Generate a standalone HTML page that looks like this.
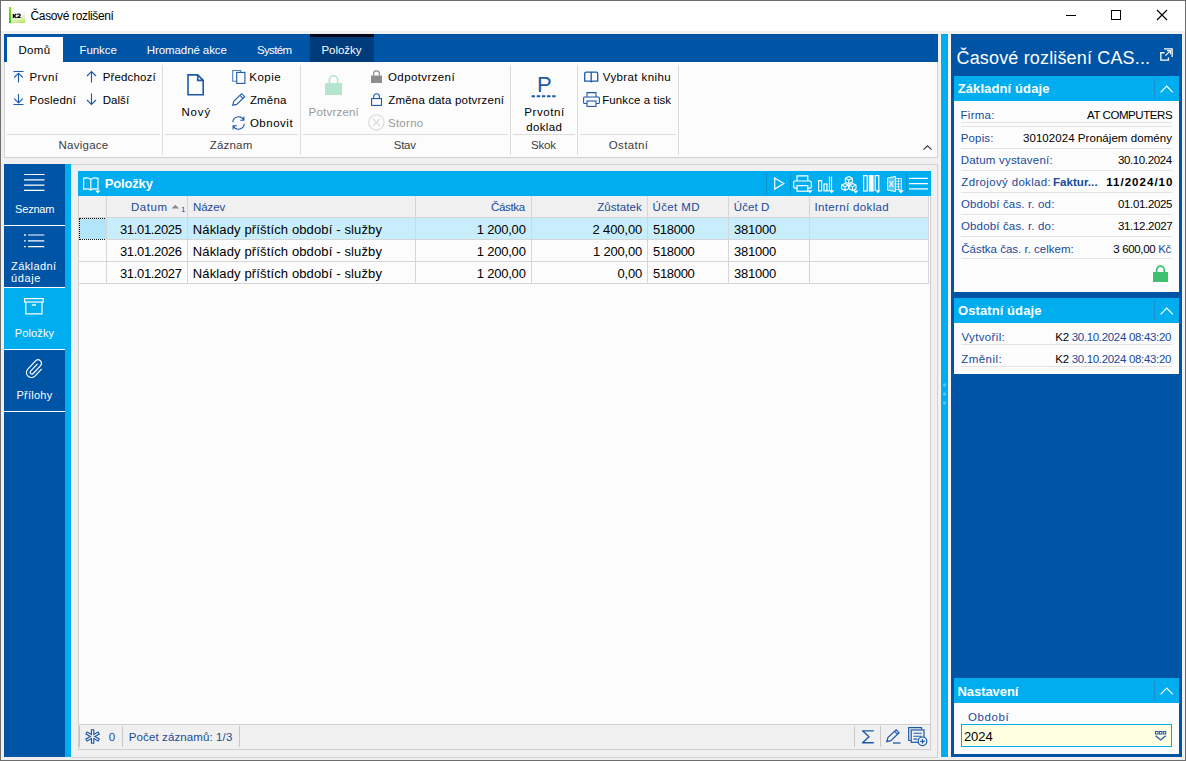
<!DOCTYPE html>
<html lang="cs">
<head>
<meta charset="utf-8">
<title>Časové rozlišení</title>
<style>
html,body{margin:0;padding:0;}
body{width:1186px;height:761px;overflow:hidden;background:#f0f0f0;font-family:"Liberation Sans",sans-serif;font-size:11.5px;color:#000;position:relative;}
.a{position:absolute;}
.t{position:absolute;white-space:nowrap;line-height:16px;height:16px;}
.c{text-align:center;}
.r{text-align:right;}
.w{color:#fff;}
.b{font-weight:bold;}
.bl{color:#1a4a98;}
.gy{color:#9a9a9a;}
.gl2{color:#3c3c3c;}
.d{font-size:13px;}
svg{position:absolute;overflow:visible;}
/* window frame */
#frame{left:0;top:0;width:1184px;height:759px;border:1px solid #6d6d6d;}
#titlebar{left:1px;top:1px;width:1184px;height:30px;background:#fff;}
/* ribbon */
#tabbar{left:4px;top:34px;width:934px;height:28px;background:#0054a6;}
#tabhome{left:7px;top:37px;width:56px;height:25px;background:#fcfcfc;}
#tabpol{left:310px;top:34px;width:64px;height:28px;background:#003b7c;border-top:3px solid #00091c;box-sizing:border-box;}
#ribbon{left:4px;top:62px;width:932px;height:95px;background:#fcfcfc;border:1px solid #d2d2d2;border-top:none;box-sizing:content-box;}
.vs{position:absolute;width:1px;background:#dcdcdc;top:65px;height:90px;}
.hs{position:absolute;height:1px;background:#dcdcdc;top:134px;}
/* sidebar */
#side{left:4px;top:164px;width:61px;height:593px;background:#0054a6;}
#sidec{left:65px;top:164px;width:6px;height:593px;background:#00adef;}
.sl{position:absolute;left:4px;width:61px;height:1px;background:#fff;}
/* splitter + right panel */
#spl{left:941px;top:34px;width:7px;height:723px;background:#00adef;}
#rp{left:951px;top:34px;width:231px;height:723px;background:#0054a6;}
.sh{position:absolute;left:954px;width:225px;height:24px;background:#00adef;}
.sb{position:absolute;left:954px;width:225px;background:#fcfcfc;}
.shs{position:absolute;left:1154px;width:1px;background:#1c8fd0;}
.rl{position:absolute;left:961px;width:211px;height:1px;background:#e3e3e3;}
/* grid */
#ghead{left:78px;top:171px;width:853px;height:25px;background:#00adef;}
#gbody{left:78px;top:196px;width:853px;height:528px;background:#fcfcfc;border-left:1px solid #d0d0d0;border-right:1px solid #d0d0d0;box-sizing:border-box;}
#gcol{left:79px;top:196px;width:849px;height:22px;background:#f0f0f0;}
#gfoot{left:78px;top:724px;width:853px;height:26px;background:#f0f0f0;border:1px solid #cfcfcf;box-sizing:border-box;}
.gl{position:absolute;background:#d6d6d6;}
</style>
</head>
<body>
<div class="a" id="titlebar"></div>
<div class="a" id="tabbar"></div>
<div class="a" id="tabhome"></div>
<div class="a" id="tabpol"></div>
<div class="a" id="ribbon"></div>
<div class="a" id="side"></div>
<div class="a" id="sidec"></div>
<div class="a" style="left:940px;top:34px;width:11px;height:723px;background:#faf5f2;"></div>
<div class="a" id="spl"></div>
<div class="a" id="rp"></div>
<div class="a" id="ghead"></div>
<div class="a" id="gbody"></div>
<div class="a" id="gcol"></div>
<div class="a" id="gfoot"></div>
<!--TITLE-->
<div class="a" style="left:11px;top:11px;width:14px;height:12px;background:linear-gradient(165deg,#ffffff 0%,#f3f3f3 40%,#e6f3cc 62%,#c3e97c 85%,#aee050 100%);"></div>
<div class="a" style="left:9px;top:7px;width:2px;height:16px;background:linear-gradient(180deg,#8ddc18,#3cc010);"></div>
<svg style="left:12.300px;top:12.700px;" width="10" height="6" viewBox="0 0 10 6"><g fill="none" stroke="#000" stroke-width="1.300"><path d="M1.400 0.900V5M4.300 0.900L2 3L4.400 5"/><path d="M5.300 1.700C6 0.700 8.300 0.800 8.200 2.100C8.100 3 6.300 3.500 5.500 4.500H8.700" stroke-width="1.150"/></g></svg>
<div class="t" id="wtitle" style="left:30.5px;top:8px;font-size:12px;letter-spacing:-0.35px;">Časové rozlišení</div>
<svg style="left:1064px;top:9px;" width="110" height="14" viewBox="0 0 110 14"><g fill="none" stroke="#000" stroke-width="1"><path d="M2 6.500H12"/><rect x="47.500" y="1.500" width="9" height="9"/><path d="M93 1L103 11M103 1L93 11" stroke-width="1.150"/></g></svg>
<!--TABS-->
<div class="t" id="tb1" style="left:18.5px;top:42px;letter-spacing:0.317px;">Domů</div>
<div class="t w" id="tb2" style="left:79.59px;top:42px;letter-spacing:-0.09px;">Funkce</div>
<div class="t w" id="tb3" style="left:146.78px;top:42px;letter-spacing:-0.087px;">Hromadné akce</div>
<div class="t w" id="tb4" style="left:257px;top:42px;letter-spacing:-0.65px;">Systém</div>
<div class="t w" id="tb5" style="left:321.41px;top:42px;letter-spacing:-0.025px;">Položky</div>
<!--RIBBON-->
<div class="vs" style="left:162px;"></div><div class="vs" style="left:300px;"></div><div class="vs" style="left:510px;"></div><div class="vs" style="left:577px;"></div><div class="vs" style="left:678px;"></div>
<div class="hs" style="left:7px;width:153px;"></div><div class="hs" style="left:165px;width:133px;"></div><div class="hs" style="left:303px;width:205px;"></div><div class="hs" style="left:513px;width:62px;"></div><div class="hs" style="left:580px;width:96px;"></div>
<!-- nav icons -->
<svg style="left:13px;top:70px;" width="11" height="13" viewBox="0 0 11 13"><g fill="none" stroke="#1c5aa8" stroke-width="1.1"><path d="M0.500 1.500H10.500M5.500 3.200V12.500M1.200 7.500L5.500 3.200L9.800 7.500"/></g></svg>
<svg style="left:13px;top:93px;" width="11" height="13" viewBox="0 0 11 13"><g fill="none" stroke="#1c5aa8" stroke-width="1.1"><path d="M0.500 11.500H10.500M5.500 1V10M1.200 5.700L5.500 10L9.800 5.700"/></g></svg>
<svg style="left:86px;top:70px;" width="11" height="13" viewBox="0 0 11 13"><g fill="none" stroke="#1c5aa8" stroke-width="1.1"><path d="M5.5 1.5V12.5M1 6L5.5 1.5L10 6"/></g></svg>
<svg style="left:86px;top:93px;" width="11" height="13" viewBox="0 0 11 13"><g fill="none" stroke="#1c5aa8" stroke-width="1.1"><path d="M5.5 0.5V11.5M1 7L5.5 11.5L10 7"/></g></svg>
<div class="t" id="r1" style="left:29.52px;top:69px;letter-spacing:0.376px;">První</div>
<div class="t" id="r2" style="left:29.59px;top:92px;letter-spacing:0.214px;">Poslední</div>
<div class="t" id="r3" style="left:102.66px;top:69px;letter-spacing:0.162px;">Předchozí</div>
<div class="t" id="r4" style="left:102.68px;top:92px;letter-spacing:0.051px;">Další</div>
<!-- Novy -->
<svg style="left:187px;top:74px;" width="18" height="22" viewBox="0 0 18 22"><path d="M1 0.900H10.700L16.200 6.400V20.700H1Z M10.700 0.900V6.400H16.200" fill="none" stroke="#1c5aa8" stroke-width="1.600"/></svg>
<div class="t c" id="r5" style="left:166.25px;width:60px;top:104px;letter-spacing:0.867px;">Nový</div>
<svg style="left:232px;top:70px;" width="14" height="14" viewBox="0 0 14 14"><g fill="none" stroke="#1c5aa8" stroke-width="1.1"><path d="M4.600 11.200H0.700V0.500H8.700V2.400" stroke="#4a7fc0"/><rect x="4.700" y="2.400" width="8.200" height="11"/></g></svg>
<svg style="left:232px;top:93px;" width="14" height="13" viewBox="0 0 14 13"><g fill="none" stroke="#1c5aa8" stroke-width="1.1"><path d="M0.7 12.3L1.7 8.4L9.6 0.7L12.7 3.7L4.7 11.4Z M8 2.3L11 5.3"/></g></svg>
<svg style="left:232px;top:116px;" width="13" height="14" viewBox="0 0 13 14"><g fill="none" stroke="#1c5aa8" stroke-width="1.1"><path d="M0.8 6.2A5.7 5.7 0 0 1 11.5 3.8M11.9 0.5V4.2H8.2"/><path d="M12.2 7.8A5.7 5.7 0 0 1 1.5 10.2M1.1 13.5V9.8H4.8"/></g></svg>
<div class="t" id="r6" style="left:249.31px;top:69px;letter-spacing:0.462px;">Kopie</div>
<div class="t" id="r7" style="left:249.94px;top:92px;letter-spacing:0.149px;">Změna</div>
<div class="t" id="r8" style="left:249.92px;top:115px;letter-spacing:0.517px;">Obnovit</div>
<!-- Stav -->
<svg style="left:325px;top:74px;" width="18" height="21" viewBox="0 0 18 21"><path d="M4.300 9V6A4.200 4.200 0 0 1 12.700 6V9" fill="none" stroke="#b4e6cf" stroke-width="1.600"/><rect x="0" y="9" width="17" height="12" fill="#b4e6cf"/></svg>
<div class="t c gy" id="r9" style="left:303.3px;width:61px;top:104px;letter-spacing:0.211px;">Potvrzení</div>
<svg style="left:371px;top:70px;" width="12" height="13" viewBox="0 0 12 13"><path d="M2.600 5.500V3.800A2.900 2.900 0 0 1 8.400 3.800V5.500" fill="none" stroke="#8c8c8c" stroke-width="1.200"/><rect x="0" y="5.500" width="11" height="7.500" fill="#8c8c8c"/></svg>
<svg style="left:371px;top:93px;" width="12" height="13" viewBox="0 0 12 13"><g fill="none" stroke="#1c5aa8" stroke-width="1.1"><path d="M2.700 5.500V3.600A2.850 2.850 0 0 1 8.400 3.600V5.500"/><rect x="0.600" y="5.600" width="9.900" height="6.800"/></g></svg>
<svg style="left:368px;top:114px;" width="17" height="17" viewBox="0 0 17 17"><g fill="none" stroke="#d9d9d9" stroke-width="1.100"><circle cx="8.400" cy="8.400" r="7.700"/><path d="M5 5L11.800 11.800M11.800 5L5 11.800"/></g></svg>
<div class="t" id="r10" style="left:388.02px;top:69px;letter-spacing:0.395px;">Odpotvrzení</div>
<div class="t" id="r11" style="left:388.2px;top:92px;letter-spacing:0.205px;">Změna data potvrzení</div>
<div class="t gy" id="r12" style="left:387.98px;top:115px;letter-spacing:0.27px;">Storno</div>
<!-- Skok -->
<div class="t" id="r13i" style="left:537px;top:71.700px;font-size:22px;line-height:26px;height:26px;color:#1c5aa8;">P</div>
<svg style="left:531px;top:94px;" width="26" height="5" viewBox="0 0 26 5"><path d="M0.600 2.300H25" stroke="#1c5aa8" stroke-width="2" stroke-dasharray="3.400 1.750" fill="none"/></svg>
<div class="t c" id="r13" style="left:513.6px;width:62px;top:104px;letter-spacing:0.583px;">Prvotní</div>
<div class="t c" id="r14" style="left:513.27px;width:62px;top:119px;letter-spacing:0.37px;">doklad</div>
<!-- Ostatni -->
<svg style="left:584.300px;top:71px;" width="15" height="12" viewBox="0 0 15 12"><path d="M7.200 1.200H2.100Q0.700 1.200 0.700 2.600V10.200H5.900Q7.200 10.200 7.200 11.300Q7.200 10.200 8.500 10.200H13.700V2.600Q13.700 1.200 12.300 1.200H7.200V11" fill="none" stroke="#1c5aa8" stroke-width="1.300"/></svg>
<svg style="left:583px;top:92px;" width="17" height="15" viewBox="0 0 17 15"><g fill="none" stroke="#1c5aa8" stroke-width="1.1"><path d="M4 5V0.600H13V5"/><rect x="0.600" y="5" width="15.800" height="6.500" rx="1"/><rect x="4" y="9" width="9" height="5.400" fill="#fcfcfc"/></g></svg>
<div class="t" id="r15" style="left:602.78px;top:69px;letter-spacing:0.391px;">Vybrat knihu</div>
<div class="t" id="r16" style="left:602.24px;top:92px;letter-spacing:0.095px;">Funkce a tisk</div>
<!-- group labels -->
<div class="t c gl2" id="g1" style="left:33.53px;width:100px;top:137px;letter-spacing:0.242px;">Navigace</div>
<div class="t c gl2" id="g2" style="left:181.08px;width:100px;top:137px;letter-spacing:0.19px;">Záznam</div>
<div class="t c gl2" id="g3" style="left:354.75px;width:100px;top:137px;letter-spacing:-0.217px;">Stav</div>
<div class="t c gl2" id="g4" style="left:493.33px;width:100px;top:137px;letter-spacing:-0.167px;">Skok</div>
<div class="t c gl2" id="g5" style="left:578.55px;width:100px;top:137px;letter-spacing:0.334px;">Ostatní</div>
<svg style="left:923.200px;top:145.300px;" width="10" height="6" viewBox="0 0 10 6"><path d="M0.500 4.700L4.550 0.900L8.600 4.700" fill="none" stroke="#3a3a3a" stroke-width="1.150"/></svg>
<!--SIDE-->
<div class="a" style="left:4px;top:288px;width:67px;height:61px;background:#00adef;"></div>
<div class="sl" style="top:225px;"></div><div class="sl" style="top:287px;"></div><div class="sl" style="top:349px;"></div><div class="sl" style="top:411px;"></div>
<svg style="left:24px;top:173px;" width="21" height="18" viewBox="0 0 21 18"><path d="M0 1.500H20.500M0 6.800H20.500M0 12.100H20.500M0 17.300H20.500" stroke="#fff" stroke-width="1.200" fill="none"/></svg>
<svg style="left:24px;top:234px;" width="21" height="14" viewBox="0 0 21 14"><path d="M4 1H20.300M4 6.800H20.300M4 12.600H20.300" stroke="#fff" stroke-width="1.200" fill="none"/><path d="M0 1H1.800M0 6.800H1.800M0 12.600H1.800" stroke="#fff" stroke-width="1.300" fill="none"/></svg>
<svg style="left:24px;top:298px;" width="20" height="17" viewBox="0 0 20 17"><g fill="none" stroke="#fff" stroke-width="1.200"><rect x="0.600" y="0.600" width="18.600" height="3.400"/><path d="M1.800 4V15.800H18V4"/><path d="M7.800 7H12" stroke-width="1.400"/></g></svg>
<svg style="left:25px;top:358px;" width="18" height="20" viewBox="0 0 18 20"><path d="M12.200 6.200L5.600 13.200A1.700 1.700 0 0 0 8.200 15.500L15.800 7.400A3.500 3.500 0 0 0 10.800 2.600L2.600 11.300A5 5 0 0 0 9.900 18.100L16.300 11.300" fill="none" stroke="#fff" stroke-width="1.200" stroke-linecap="round"/></svg>
<div class="t w" id="s1" style="left:15.08px;top:201px;font-size:11px;letter-spacing:-0.2px;">Seznam</div>
<div class="t w" id="s2" style="left:11.03px;top:257.500px;font-size:11px;letter-spacing:0.407px;">Základní</div>
<div class="t w" id="s3" style="left:11.08px;top:269.700px;font-size:11px;letter-spacing:0.601px;">údaje</div>
<div class="t w" id="s4" style="left:14.68px;top:325px;font-size:11px;letter-spacing:0.15px;">Položky</div>
<div class="t w" id="s5" style="left:16.52px;top:387px;font-size:11px;letter-spacing:0.241px;">Přílohy</div>
<!--GRID-->
<div class="a" style="left:71px;top:164px;width:866px;height:592px;border:1px solid #d2d2d2;border-left:none;box-sizing:content-box;"></div>
<!-- selected row -->
<div class="a" style="left:79px;top:218px;width:849px;height:21px;background:#c9eefb;"></div>
<div class="a" style="left:79px;top:218px;width:27px;height:21px;background:#b3e5fa;"></div>
<div class="a" style="left:79px;top:218px;width:28px;height:22px;border:1px dotted #111;box-sizing:border-box;"></div>
<!-- h lines -->
<div class="gl" style="left:79px;top:217px;width:850px;height:1px;"></div><div class="gl" style="left:106px;top:239px;width:823px;height:1px;"></div><div class="gl" style="left:79px;top:261px;width:850px;height:1px;"></div><div class="gl" style="left:79px;top:283px;width:850px;height:1px;"></div>
<!-- v lines -->
<div class="gl" style="left:106px;top:196px;width:1px;height:88px;"></div><div class="gl" style="left:187px;top:196px;width:1px;height:88px;"></div><div class="gl" style="left:415px;top:196px;width:1px;height:88px;"></div><div class="gl" style="left:531px;top:196px;width:1px;height:88px;"></div><div class="gl" style="left:647px;top:196px;width:1px;height:88px;"></div><div class="gl" style="left:728px;top:196px;width:1px;height:88px;"></div><div class="gl" style="left:809px;top:196px;width:1px;height:88px;"></div><div class="gl" style="left:928px;top:196px;width:1px;height:88px;"></div>
<!-- header title -->
<svg style="left:83px;top:177px;" width="17" height="16" viewBox="0 0 17 16"><g fill="none" stroke="#fff" stroke-width="1.200"><path d="M7.800 2.500C6.300 1 3 0.800 0.600 1.300V12.200C3 11.700 6.300 11.900 7.800 13C9.300 11.900 12.600 11.700 15 12.200V1.300C12.600 0.800 9.300 1 7.800 2.500ZM7.800 2.500V13"/></g><path d="M12.200 13.500H17.400L14.800 16.500Z" fill="#fff"/></svg>
<div class="t w b" id="gt" style="left:104.69px;top:176px;font-size:13px;letter-spacing:-0.158px;">Položky</div>
<!-- toolbar -->
<div class="a" style="left:766px;top:173px;width:1px;height:21px;background:#0b93d2;"></div><div class="a" style="left:790px;top:173px;width:1px;height:21px;background:#0b93d2;"></div><div class="a" style="left:906px;top:173px;width:1px;height:21px;background:#0b93d2;"></div>
<svg style="left:774px;top:177px;" width="11" height="13" viewBox="0 0 11 13"><path d="M0.700 0.900L9.800 6.500L0.700 12.100Z" fill="none" stroke="#fff" stroke-width="1.200" stroke-linejoin="miter"/></svg>
<svg style="left:793px;top:175px;" width="20" height="19" viewBox="0 0 20 19"><g fill="none" stroke="#fff" stroke-width="1.200"><path d="M4 6V0.800H14.800V6"/><rect x="0.700" y="6" width="17.600" height="7.200" rx="1.200"/><rect x="4" y="10.600" width="10.800" height="5.600" fill="#00adef"/></g><path d="M14.300 15.300H19.700L17 18.300Z" fill="#fff"/></svg>
<svg style="left:818px;top:176px;" width="18" height="18" viewBox="0 0 18 18"><g fill="none" stroke="#fff" stroke-width="1.200"><rect x="0.600" y="4.600" width="3" height="10.300"/><rect x="6" y="8" width="3" height="6.900"/><path d="M13.500 0.600V14.500"/><path d="M11.400 0.600V14.900H9.200" stroke-width="1"/></g><path d="M10.800 14.300H16.200L13.500 17.400Z" fill="#fff"/></svg>
<svg style="left:841px;top:176px;" width="18" height="18" viewBox="0 0 18 18"><g fill="none" stroke="#fff" stroke-width="1.100" stroke-linejoin="round"><path d="M7.800 0.600L11.300 2.300V6L7.800 7.700L4.300 6V2.300ZM4.300 2.300L7.800 4L11.300 2.300M7.800 4V7.700"/><path d="M4 7.400L7.500 9.100V12.800L4 14.500L0.600 12.800V9.100ZM0.600 9.100L4 10.800L7.500 9.100M4 10.800V14.500"/><path d="M11.500 7.400L15 9.100V12.800L11.500 14.500L8.100 12.800V9.100ZM8.100 9.100L11.500 10.800L15 9.100M11.500 10.800V14.500"/></g><path d="M12 14.400H17.400L14.700 17.400Z" fill="#fff"/></svg>
<svg style="left:863px;top:175px;" width="18" height="19" viewBox="0 0 18 19"><g fill="none" stroke="#fff" stroke-width="1.200"><rect x="0.600" y="0.700" width="3.600" height="15.300"/><rect x="6.400" y="0.700" width="3.600" height="15.300" fill="#fff"/><path d="M12.200 16V0.700H15.800V15"/></g><path d="M12.200 15.200H17.600L14.900 18.300Z" fill="#fff"/></svg>
<svg style="left:887px;top:176px;" width="18" height="18" viewBox="0 0 18 18"><path d="M0.500 2L8.500 0.500V15.500L0.500 14Z" fill="#fff" fill-opacity="0.350" stroke="#fff" stroke-width="1"/><path d="M2.600 5L6.400 11M6.400 5L2.600 11" stroke="#fff" stroke-width="1.100" fill="none"/><path d="M8.500 2.500H14.500V13.500H8.500M8.500 5.200H14.500M8.500 8H14.500M8.500 10.800H14.500M11.500 2.500V13.500" fill="none" stroke="#fff" stroke-width="0.900" stroke-opacity="0.850"/><path d="M11.200 14.300H16.800L14 17.400Z" fill="#fff"/></svg>
<svg style="left:909px;top:177px;" width="19" height="13" viewBox="0 0 19 13"><path d="M0 1.400H19M0 6.600H19M0 11.900H19" stroke="#fff" stroke-width="1.400" fill="none"/></svg>
<!-- column headers -->
<div class="t bl" id="h1" style="left:130.9px;top:199px;letter-spacing:0.586px;">Datum</div>
<svg style="left:171px;top:204px;" width="9" height="5" viewBox="0 0 9 5"><path d="M0.500 4.600L4.300 0.800L8.100 4.600Z" fill="#8a8a8a"/></svg>
<div class="t bl" id="h1n" style="left:181px;top:205px;font-size:8px;line-height:10px;height:10px;">1</div>
<div class="t bl" id="h2" style="left:192.99px;top:199px;letter-spacing:-0.1px;">Název</div>
<div class="t bl" id="h3" style="left:490.98px;top:199px;letter-spacing:-0.33px;">Částka</div>
<div class="t bl" id="h4" style="left:597.13px;top:199px;letter-spacing:0.064px;">Zůstatek</div>
<div class="t bl" id="h5" style="left:652.55px;top:199px;letter-spacing:0.375px;">Účet MD</div>
<div class="t bl" id="h6" style="left:733.8px;top:199px;letter-spacing:0.07px;">Účet D</div>
<div class="t bl" id="h7" style="left:814.48px;top:199px;letter-spacing:0.35px;">Interní doklad</div>
<!-- rows -->
<div class="t d" id="a1" style="left:119.95px;top:222px;letter-spacing:-0.338px;">31.01.2025</div><div class="t d" id="a2" style="left:192.76px;top:222px;letter-spacing:0.136px;">Náklady příštích období - služby</div><div class="t d" id="a3" style="left:476.73px;top:222px;letter-spacing:-0.208px;">1 200,00</div><div class="t d" id="a4" style="left:592.54px;top:222px;letter-spacing:-0.128px;">2 400,00</div><div class="t d" id="a5" style="left:652.95px;top:222px;letter-spacing:-0.31px;">518000</div><div class="t d" id="a6" style="left:734.09px;top:222px;letter-spacing:-0.23px;">381000</div>
<div class="t d" id="b1" style="left:119.95px;top:244px;letter-spacing:-0.338px;">31.01.2026</div><div class="t d" id="b2" style="left:192.76px;top:244px;letter-spacing:0.136px;">Náklady příštích období - služby</div><div class="t d" id="b3" style="left:476.73px;top:244px;letter-spacing:-0.208px;">1 200,00</div><div class="t d" id="b4" style="left:593.04px;top:244px;letter-spacing:-0.199px;">1 200,00</div><div class="t d" id="b5" style="left:653px;top:244px;letter-spacing:-0.31px;">518000</div><div class="t d" id="b6" style="left:734.09px;top:244px;letter-spacing:-0.23px;">381000</div>
<div class="t d" id="c1" style="left:119.95px;top:266px;letter-spacing:-0.339px;">31.01.2027</div><div class="t d" id="c2" style="left:192.76px;top:266px;letter-spacing:0.136px;">Náklady příštích období - služby</div><div class="t d" id="c3" style="left:476.73px;top:266px;letter-spacing:-0.208px;">1 200,00</div><div class="t d" id="c4" style="left:617.54px;top:266px;letter-spacing:-0.216px;">0,00</div><div class="t d" id="c5" style="left:653px;top:266px;letter-spacing:-0.31px;">518000</div><div class="t d" id="c6" style="left:734.09px;top:266px;letter-spacing:-0.23px;">381000</div>
<!-- footer -->
<div class="a" style="left:79px;top:726px;width:1px;height:21px;background:#c4c4c4;"></div><div class="a" style="left:122px;top:726px;width:1px;height:21px;background:#c8c8c8;"></div><div class="a" style="left:239px;top:726px;width:1px;height:21px;background:#c8c8c8;"></div><div class="a" style="left:854px;top:726px;width:1px;height:21px;background:#c8c8c8;"></div><div class="a" style="left:880px;top:726px;width:1px;height:21px;background:#c8c8c8;"></div>
<svg style="left:85px;top:729px;" width="16" height="16" viewBox="0 0 16 16"><g fill="none" stroke="#1c5aa8" stroke-width="3.500" stroke-linecap="butt"><path d="M7.600 0.200V14.800M1 3.700L14.200 11.300M14.200 3.700L1 11.300"/></g><g fill="none" stroke="#f0f0f0" stroke-width="1.200" stroke-linecap="butt"><path d="M7.600 1.300V13.700M2 4.300L13.200 10.700M13.200 4.300L2 10.700"/></g></svg>
<div class="t bl" id="f1" style="left:108.67px;top:729.300px;letter-spacing:1.2px;">0</div>
<div class="t bl" id="f2" style="left:128.73px;top:729.300px;letter-spacing:0.115px;">Počet záznamů: 1/3</div>
<svg style="left:861px;top:729px;" width="14" height="16" viewBox="0 0 14 16"><path d="M12.300 1.850H1.500L8 7.750L1.500 13.700H12.300" fill="none" stroke="#1c5aa8" stroke-width="1.400" stroke-linecap="round" stroke-linejoin="round"/></svg>
<svg style="left:886px;top:729px;" width="15" height="15" viewBox="0 0 15 15"><g fill="none" stroke="#1c5aa8" stroke-width="1.200"><path d="M0.800 12.600L1.900 8.600L10.100 0.800L13.100 3.700L4.900 11.600Z M8.500 2.400L11.500 5.300"/><path d="M7 14H14.500" stroke-width="1.300"/></g></svg>
<svg style="left:908px;top:727px;" width="20" height="20" viewBox="0 0 20 20"><g fill="none" stroke="#1c5aa8" stroke-width="1.200"><path d="M2.800 13.500H0.700V0.700H13.500V2.500"/><rect x="3.200" y="3" width="12.800" height="12.300" fill="#f0f0f0"/><path d="M5.500 6.300H13.800M5.500 9.200H13.800M5.500 12.100H9.500" stroke-width="1.100"/><circle cx="14.500" cy="14.300" r="4.300" fill="#f0f0f0"/><path d="M12.200 14.300H16.800M14.500 12V16.600"/></g></svg>
<!--RIGHT-->
<div class="t w" id="pt" style="left:956.55px;top:45.800px;font-size:18px;line-height:24px;height:24px;letter-spacing:0.157px;">Časové rozlišení CAS...</div>
<svg style="left:1160px;top:47px;" width="14" height="15" viewBox="0 0 14 15"><g fill="none" stroke="#fff" stroke-width="1.300"><path d="M4.600 5.750H0.850V13.150H8.450V10.600"/><path d="M4 1.850H12.150V10"/><path d="M5.400 8.700L10.300 3.800M6.900 3.700H10.500V7.300" stroke-width="1.200"/></g></svg>
<div class="sh" style="top:76px;height:25px;"></div><div class="sb" style="top:101px;height:191px;"></div><div class="shs" style="top:78px;height:21px;"></div>
<div class="t w b" id="sh1" style="left:957.64px;top:80.800px;font-size:13px;letter-spacing:0.119px;">Základní údaje</div>
<svg style="left:1160px;top:85px;" width="14" height="8" viewBox="0 0 14 8"><path d="M0.600 7.400L6.700 1.200L12.800 7.400" fill="none" stroke="#fff" stroke-width="1.200"/></svg>
<div class="rl" style="top:122px;"></div><div class="rl" style="top:126px;"></div><div class="rl" style="top:148px;"></div><div class="rl" style="top:170px;"></div><div class="rl" style="top:192px;"></div><div class="rl" style="top:214px;"></div><div class="rl" style="top:236px;"></div><div class="rl" style="top:258px;"></div>
<div class="t bl" id="p1" style="left:960.62px;top:107.2px;letter-spacing:0.24px;">Firma:</div><div class="t" id="v1" style="left:1087px;top:107.2px;letter-spacing:-0.432px;">AT COMPUTERS</div>
<div class="t bl" id="p2" style="left:960.76px;top:130.3px;letter-spacing:0.14px;">Popis:</div><div class="t" id="v2" style="left:1023px;top:130.3px;letter-spacing:0.054px;">30102024 Pronájem domény</div>
<div class="t bl" id="p3" style="left:960.76px;top:152.2px;letter-spacing:0.2px;">Datum vystavení:</div><div class="t" id="v3" style="font-size:11.5px;left:1117.88px;top:152.2px;letter-spacing:-0.356px;">30.10.2024</div>
<div class="t bl" id="p4" style="left:961.3px;top:174.4px;letter-spacing:0.34px;">Zdrojový doklad:</div><div class="t b" id="v4a" style="left:1052.94px;top:174.4px;color:#184a9b;letter-spacing:0.068px;">Faktur...</div><div class="t b" id="v4" style="left:1106.22px;top:174.4px;letter-spacing:1.033px;">11/2024/10</div>
<div class="t bl" id="p5" style="left:960.98px;top:196.4px;letter-spacing:0.153px;">Období čas. r. od:</div><div class="t" id="v5" style="font-size:11.5px;left:1117.88px;top:196.4px;letter-spacing:-0.328px;">01.01.2025</div>
<div class="t bl" id="p6" style="left:960.98px;top:218.3px;letter-spacing:0.153px;">Období čas. r. do:</div><div class="t" id="v6" style="font-size:11.5px;left:1117.88px;top:218.3px;letter-spacing:-0.3px;">31.12.2027</div>
<div class="t bl" id="p7" style="left:961.19px;top:240.5px;">Částka čas. r. celkem:</div><div class="t" id="v7" style="font-size:11.5px;left:1113.23px;top:240.5px;letter-spacing:-0.33px;">3 600,00 <span class="bl">Kč</span></div>
<svg style="left:1153px;top:265px;" width="16" height="17" viewBox="0 0 16 17"><path d="M3.700 7V5A3.800 3.800 0 0 1 11.300 5V7" fill="none" stroke="#3ec06f" stroke-width="1.700"/><rect x="0" y="7" width="15" height="10" fill="#3ec06f"/></svg>
<div class="sh" style="top:298px;height:25px;"></div><div class="sb" style="top:323px;height:51px;"></div><div class="shs" style="top:300px;height:21px;"></div>
<div class="t w b" id="sh2" style="left:958px;top:303.100px;font-size:13px;letter-spacing:0.087px;">Ostatní údaje</div>
<svg style="left:1160px;top:307px;" width="14" height="8" viewBox="0 0 14 8"><path d="M0.600 7.400L6.700 1.200L12.800 7.400" fill="none" stroke="#fff" stroke-width="1.200"/></svg>
<div class="rl" style="top:344px;"></div><div class="rl" style="top:366px;"></div>
<div class="t bl" id="p8" style="left:961.48px;top:329px;letter-spacing:0.35px;">Vytvořil:</div><div class="t" id="v8" style="font-size:11.5px;left:1055.31px;top:329px;letter-spacing:-0.316px;">K2 <span class="bl">30.10.2024 08:43:20</span></div>
<div class="t bl" id="p9" style="left:961.16px;top:351px;letter-spacing:0.458px;">Změnil:</div><div class="t" id="v9" style="font-size:11.5px;left:1055.31px;top:351px;letter-spacing:-0.316px;">K2 <span class="bl">30.10.2024 08:43:20</span></div>
<div class="sh" style="top:678px;height:25px;"></div><div class="sb" style="top:703px;height:51px;"></div><div class="shs" style="top:680px;height:21px;"></div>
<div class="t w b" id="sh3" style="left:957.55px;top:684px;font-size:13px;letter-spacing:-0.076px;">Nastavení</div>
<svg style="left:1160px;top:687px;" width="14" height="8" viewBox="0 0 14 8"><path d="M0.600 7.400L6.700 1.200L12.800 7.400" fill="none" stroke="#fff" stroke-width="1.200"/></svg>
<div class="t bl" id="p10" style="left:968.08px;top:708.9px;letter-spacing:0.6px;">Období</div>
<div class="a" style="left:961px;top:724px;width:211px;height:23px;background:#ffffe1;border:1px solid #00adef;box-sizing:border-box;"></div>
<div class="t d" id="v10" style="left:963.900px;top:728.700px;">2024</div>
<svg style="left:1155px;top:731px;" width="12" height="10" viewBox="0 0 12 10"><g fill="none" stroke="#1c5aa8"><rect x="0.500" y="0.500" width="2.500" height="2.500"/><rect x="4.400" y="0.500" width="2.500" height="2.500"/><rect x="8.300" y="0.500" width="2.500" height="2.500"/><path d="M0.600 4.800L5.700 9L10.800 4.800" stroke-width="1.200"/></g></svg>
<svg style="left:941px;top:382px;" width="7" height="24" viewBox="0 0 7 24"><g fill="#4fc8fb"><circle cx="3.600" cy="2.900" r="1.700"/><circle cx="3.600" cy="12" r="1.700"/><circle cx="3.600" cy="21" r="1.700"/></g></svg>
<div class="a" id="frame"></div>
</body>
</html>
